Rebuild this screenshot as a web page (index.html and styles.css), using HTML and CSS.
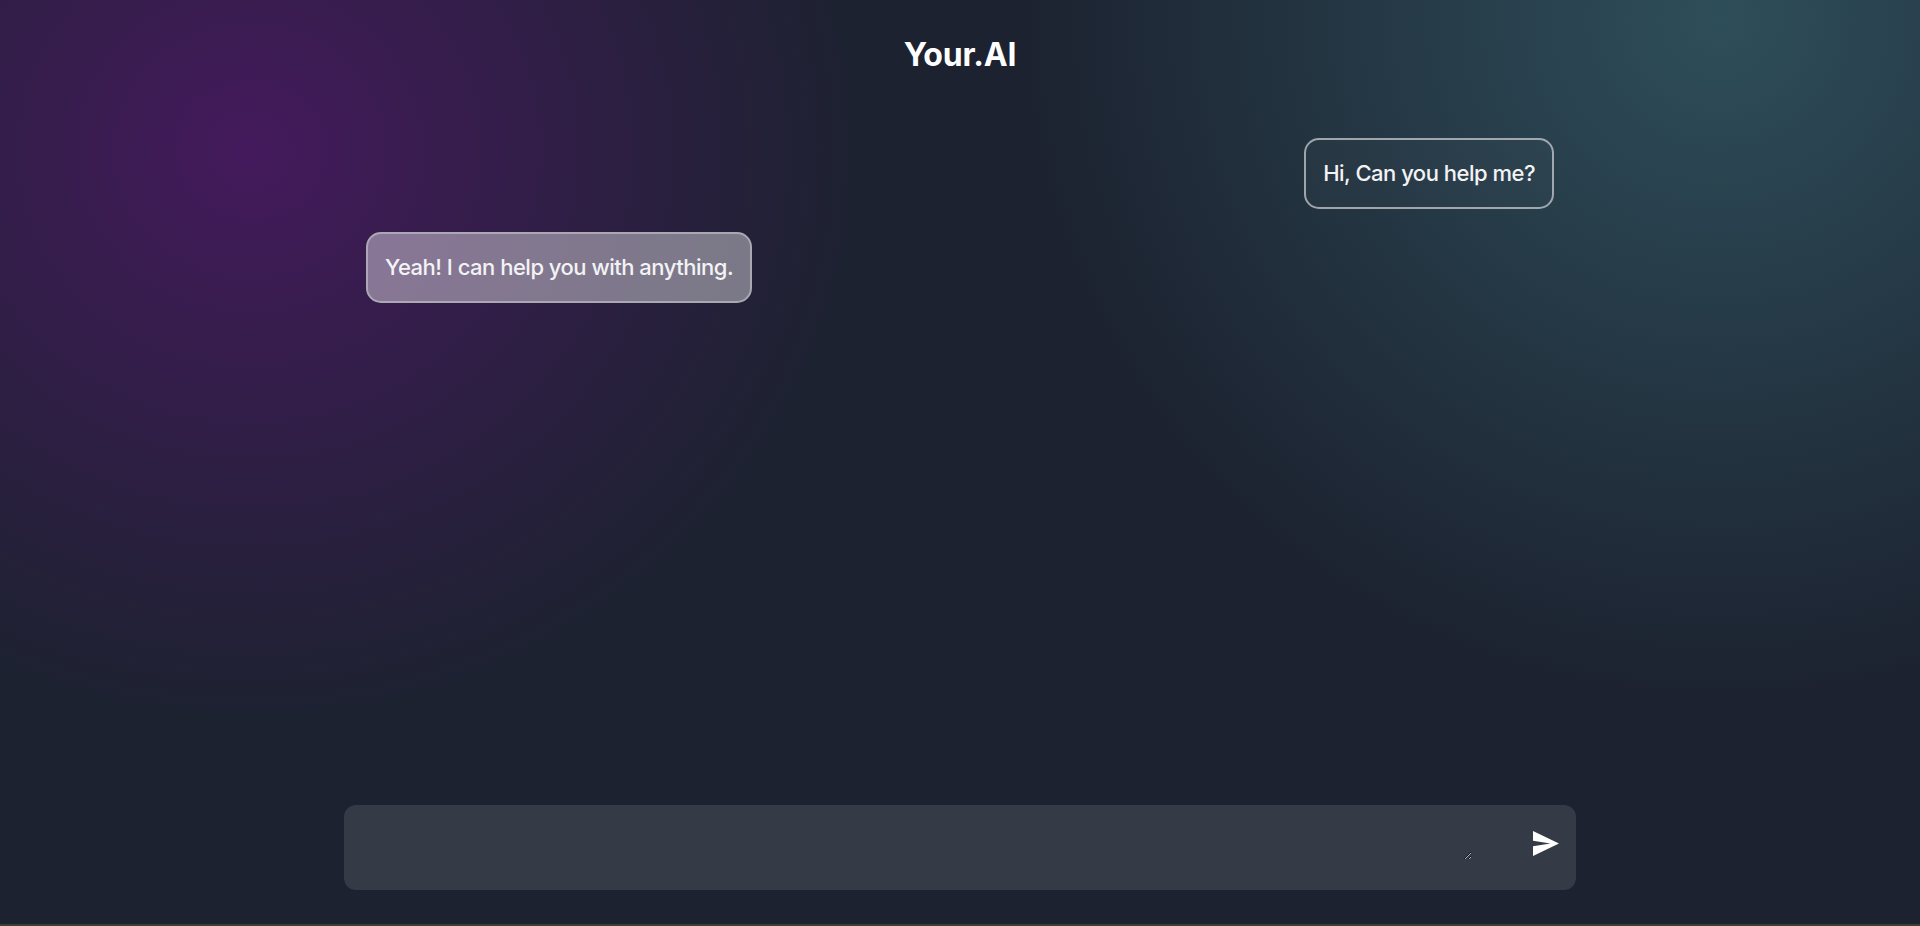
FILE: index.html
```html
<!DOCTYPE html>
<html lang="en">
<head>
<meta charset="utf-8">
<title>Your.AI</title>
<link rel="stylesheet" href="styles.css">
</head>
<body>
<div class="app">
  <header class="header">Your.AI</header>
  <main class="chat">
    <div class="msg msg-user">Hi, Can you help me?</div>
    <div class="msg msg-ai">Yeah! I can help you with anything.</div>
  </main>
  <form class="composer">
    <textarea class="composer-input" rows="1"></textarea>
    <button class="send" type="button" aria-label="Send">
      <svg width="26" height="25" viewBox="2 3 21 18" preserveAspectRatio="none"><path d="M2.01 21L23 12 2.01 3 2 10l14 2-14 2z" fill="#fff"/></svg>
    </button>
  </form>
  <div class="bottom-line"></div>
</div>
</body>
</html>
```

FILE: styles.css
```css
* { box-sizing: border-box; }
html, body { margin: 0; padding: 0; height: 100%; }
body {
  font-family: Inter, "Noto Sans", sans-serif;
  color: #f3f3f5;
  background:
    radial-gradient(ellipse 620px 580px at 250px 150px, rgba(68,26,92,1) 0%, rgba(68,26,92,0.55) 45%, rgba(68,26,92,0) 100%),
    radial-gradient(ellipse 700px 680px at 1720px 20px, rgba(46,78,90,1) 0%, rgba(46,78,90,0.55) 45%, rgba(46,78,90,0) 100%),
    #1c2230;
  overflow: hidden;
}
.app {
  height: 926px;
  display: flex;
  flex-direction: column;
}
.header {
  padding-top: 35px;
  text-align: center;
  font-size: 32px;
  line-height: 40px;
  font-weight: 700;
  color: #ffffff;
  letter-spacing: -0.2px;
}
.chat {
  flex: 1;
  width: 1232px;
  margin: 0 auto;
  padding: 63px 22px 0;
  display: flex;
  flex-direction: column;
  align-items: flex-start;
  gap: 23px;
}
.msg {
  font-size: 22px;
  line-height: 35px;
  font-weight: 500;
  padding: 16px 17px;
  border: 2px solid rgba(200,202,206,0.75);
  border-radius: 15px;
  white-space: nowrap;
  letter-spacing: -0.5px;
}
.msg-user {
  align-self: flex-end;
  background: rgba(255,255,255,0.02);
}
.msg-ai {
  background: rgba(255,255,255,0.4);
  border-color: rgba(190,190,195,0.7);
}
.composer {
  width: 1232px;
  height: 85px;
  margin: 0 auto 34px;
  background: #343a46;
  border-radius: 12px;
  display: flex;
  align-items: center;
  padding: 0 17px 0 20px;
}
.composer-input {
  flex: 1;
  height: 24px;
  background: transparent;
  border: none;
  outline: none;
  color: #fff;
  font-family: inherit;
  font-size: 16px;
  margin-right: 61px;
}
.send {
  background: none;
  border: none;
  padding: 0;
  width: 26px;
  height: 25px;
  margin-bottom: 9px;
  cursor: pointer;
  display: flex;
}
.bottom-line {
  height: 2px;
  background: #3d3d30;
}
```
